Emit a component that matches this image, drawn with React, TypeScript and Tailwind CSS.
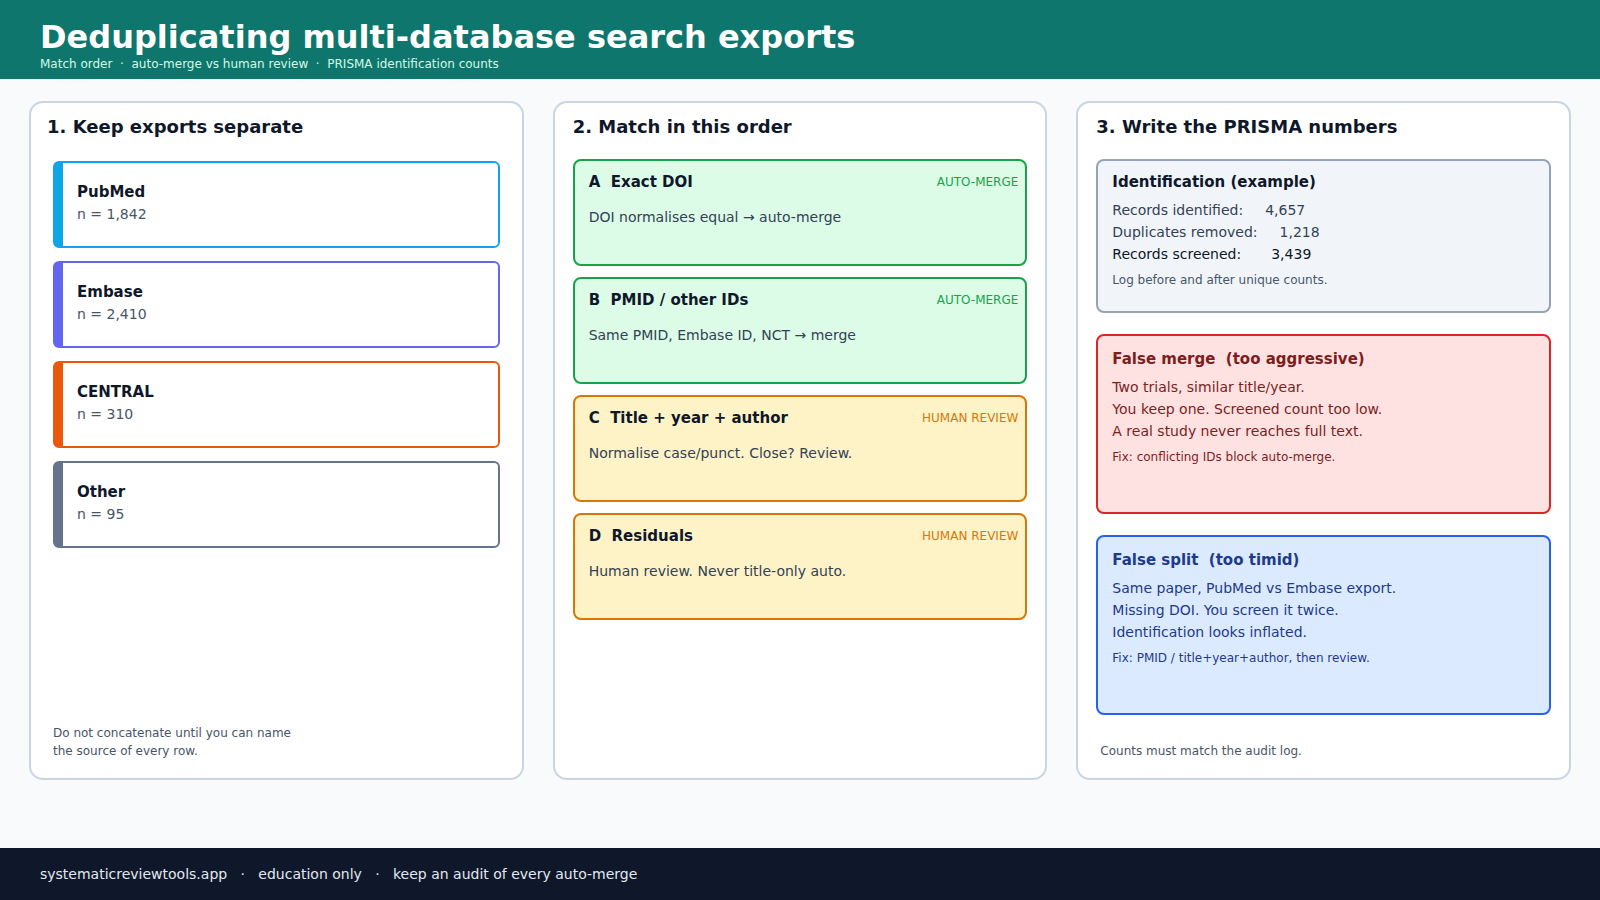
const font = { fontFamily: '"DejaVu Sans", "Noto Sans", sans-serif' }

const sources = [
  { name: "PubMed", n: "1,842", border: "border-[#0ea5e9]" },
  { name: "Embase", n: "2,410", border: "border-[#6366f1]" },
  { name: "CENTRAL", n: "310", border: "border-[#ea580c]" },
  { name: "Other", n: "95", border: "border-[#64748b]" },
]

const steps = [
  { k: "A", title: "Exact DOI", tag: "AUTO-MERGE", body: "DOI normalises equal → auto-merge", auto: true },
  { k: "B", title: "PMID / other IDs", tag: "AUTO-MERGE", body: "Same PMID, Embase ID, NCT → merge", auto: true },
  { k: "C", title: "Title + year + author", tag: "HUMAN REVIEW", body: "Normalise case/punct. Close? Review.", auto: false },
  { k: "D", title: "Residuals", tag: "HUMAN REVIEW", body: "Human review. Never title-only auto.", auto: false },
]

export default function App() {
  return (
    <div className="w-[1600px] h-[900px] flex flex-col bg-[#f8fafc] text-[#0f172a]" style={font}>
      <header className="h-[79px] bg-[#0f766e] px-10 pt-[18px] text-white">
        <h1 className="text-[32px] font-bold leading-[38px]">Deduplicating multi-database search exports</h1>
        <p className="text-[12px] leading-[16px] text-[#d1fae5]">
          Match order &nbsp;·&nbsp; auto-merge vs human review &nbsp;·&nbsp; PRISMA identification counts
        </p>
      </header>

      <main className="flex-1 grid grid-cols-3 gap-[29px] px-[29px] pt-[22px] pb-[68px]">
        {/* Panel 1 */}
        <section className="bg-white border-2 border-[#cbd5e1] rounded-[14px] px-[22px] pt-[12px] pb-[18px] flex flex-col">
          <h2 className="text-[18px] font-bold leading-[24px] mb-[22px] -ml-[6px]">1. Keep exports separate</h2>
          <div className="flex flex-col gap-[13px]">
            {sources.map((s) => (
              <div key={s.name} className={`h-[87px] bg-white border-2 border-l-[10px] ${s.border} rounded-[6px] pl-[14px] pt-[18px]`}>
                <div className="text-[15px] font-bold leading-[22px]">{s.name}</div>
                <div className="text-[14px] text-[#475569] leading-[22px]">n = {s.n}</div>
              </div>
            ))}
          </div>
          <p className="mt-auto text-[12px] leading-[18px] text-[#475569]">
            Do not concatenate until you can name
            <br />
            the source of every row.
          </p>
        </section>

        {/* Panel 2 */}
        <section className="bg-white border-2 border-[#cbd5e1] rounded-[14px] px-[18px] pt-[12px]">
          <h2 className="text-[18px] font-bold leading-[24px] mb-[20px]">2. Match in this order</h2>
          <div className="flex flex-col gap-[11px]">
            {steps.map((s) => (
              <div
                key={s.k}
                className={`h-[107px] border-2 rounded-[8px] pl-[14px] pr-[7px] pt-[10px] ${s.auto ? "bg-[#dcfce7] border-[#16a34a]" : "bg-[#fef3c7] border-[#d97706]"}`}
              >
                <div className="flex items-center justify-between">
                  <span className="text-[15px] font-bold leading-[22px]">{s.k}&nbsp; {s.title}</span>
                  <span className={`text-[12px] ${s.auto ? "text-[#16a34a]" : "text-[#d97706]"}`}>{s.tag}</span>
                </div>
                <p className="mt-[14px] text-[14px] text-[#334155] leading-[20px]">{s.body}</p>
              </div>
            ))}
          </div>
        </section>

        {/* Panel 3 */}
        <section className="bg-white border-2 border-[#cbd5e1] rounded-[14px] px-[18px] pt-[12px] pb-[18px] flex flex-col">
          <h2 className="text-[18px] font-bold leading-[24px] mb-[20px]">3. Write the PRISMA numbers</h2>
          <div className="h-[154px] bg-[#f1f5f9] border-2 border-[#94a3b8] rounded-[8px] px-[14px] pt-[10px]">
            <div className="text-[15px] font-bold leading-[22px]">Identification (example)</div>
            <div className="mt-[6px] text-[14px] leading-[22px] text-[#334155]">
              <div>Records identified:<span className="ml-[22px]">4,657</span></div>
              <div>Duplicates removed:<span className="ml-[22px]">1,218</span></div>
              <div className="text-[#0f172a]">Records screened:<span className="ml-[30px]">3,439</span></div>
            </div>
            <p className="mt-[6px] text-[12px] text-[#475569]">Log before and after unique counts.</p>
          </div>
          <div className="mt-[21px] h-[180px] bg-[#fee2e2] border-2 border-[#dc2626] rounded-[8px] px-[14px] pt-[12px] text-[#7f1d1d]">
            <div className="text-[15px] font-bold leading-[22px]">False merge&nbsp; (too aggressive)</div>
            <div className="mt-[6px] text-[14px] leading-[22px]">
              <div>Two trials, similar title/year.</div>
              <div>You keep one. Screened count too low.</div>
              <div>A real study never reaches full text.</div>
            </div>
            <p className="mt-[6px] text-[12px]">Fix: conflicting IDs block auto-merge.</p>
          </div>
          <div className="mt-[21px] h-[180px] bg-[#dbeafe] border-2 border-[#2563eb] rounded-[8px] px-[14px] pt-[12px] text-[#1e3a8a]">
            <div className="text-[15px] font-bold leading-[22px]">False split&nbsp; (too timid)</div>
            <div className="mt-[6px] text-[14px] leading-[22px]">
              <div>Same paper, PubMed vs Embase export.</div>
              <div>Missing DOI. You screen it twice.</div>
              <div>Identification looks inflated.</div>
            </div>
            <p className="mt-[6px] text-[12px]">Fix: PMID / title+year+author, then review.</p>
          </div>
          <p className="mt-auto ml-[4px] text-[12px] text-[#475569]">Counts must match the audit log.</p>
        </section>
      </main>

      <footer className="h-[52px] bg-[#0f172a] px-10 flex items-center text-[14px] text-[#e2e8f0]">
        systematicreviewtools.app &nbsp; · &nbsp; education only &nbsp; · &nbsp; keep an audit of every auto-merge
      </footer>
    </div>
  )
}
